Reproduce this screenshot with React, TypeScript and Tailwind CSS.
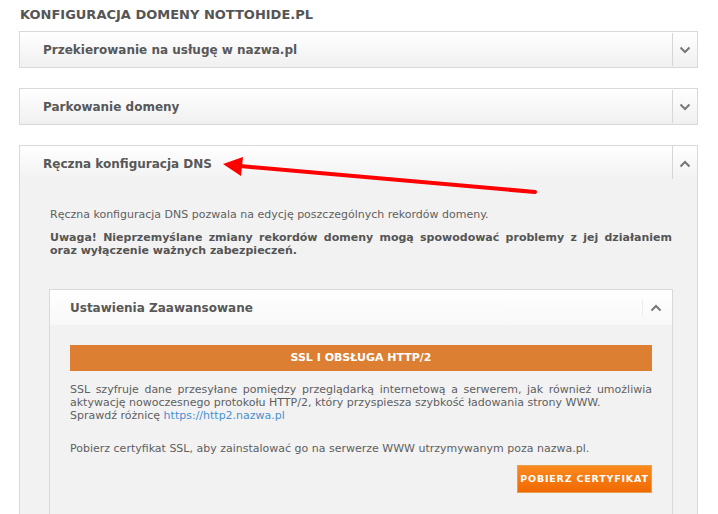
import React from "react";

const Chevron = ({ up }: { up?: boolean }) => (
  <svg width="12" height="8" viewBox="0 0 12 8" className="block">
    {up ? (
      <polyline points="1.5,6.5 6,2 10.5,6.5" fill="none" stroke="#777" strokeWidth="2" />
    ) : (
      <polyline points="1.5,1.5 6,6 10.5,1.5" fill="none" stroke="#777" strokeWidth="2" />
    )}
  </svg>
);

const CollapsedPanel = ({ title }: { title: string }) => (
  <div className="border border-[#d9d9d9] h-[37px] flex bg-gradient-to-b from-[#ffffff] to-[#f0f0f0]">
    <div className="flex-1 flex items-center pl-[23px] text-[12px] font-bold text-[#585858]">{title}</div>
    <div className="w-[25px] my-px border-l border-[#d6d6d6] flex items-center justify-center">
      <Chevron />
    </div>
  </div>
);

export default function App() {
  return (
    <div
      className="w-[718px] h-[514px] overflow-hidden bg-white relative text-[#5f5f5f]"
      style={{ fontFamily: '"DejaVu Sans", Verdana, sans-serif' }}
    >
      <div className="pl-[19px] pr-[20px] pt-[7px]">
        <div className="text-[13px] font-bold text-[#555] pl-px h-[24px] leading-[16px]">
          KONFIGURACJA DOMENY NOTTOHIDE.PL
        </div>
        <CollapsedPanel title="Przekierowanie na usługę w nazwa.pl" />
        <div className="h-[20px]" />
        <CollapsedPanel title="Parkowanie domeny" />
        <div className="h-[20px]" />
        <div className="border border-[#d9d9d9] bg-[#f2f2f2] h-[400px]">
          <div className="h-[33px] flex bg-gradient-to-b from-[#ffffff] to-[#f2f2f2]">
            <div className="flex-1 flex items-center pl-[23px] pt-[2px] text-[12px] font-bold text-[#585858]">
              Ręczna konfiguracja DNS
            </div>
            <div className="w-[25px] border-l border-[#d6d6d6] flex items-center justify-center pt-[2px]">
              <Chevron up />
            </div>
          </div>
          <div className="pl-[29px] pr-[24px] pt-[29px]">
            <p className="px-px text-[11px] leading-[13px]">
              Ręczna konfiguracja DNS pozwala na edycję poszczególnych rekordów domeny.
            </p>
            <p className="px-px mt-[10px] text-[11px] leading-[13px] font-bold text-justify text-[#555]">
              Uwaga! Nieprzemyślane zmiany rekordów domeny mogą spowodować problemy z jej działaniem oraz wyłączenie ważnych zabezpieczeń.
            </p>
            <div className="mt-[32px] border border-[#d9d9d9] bg-[#f2f2f2]">
              <div className="h-[35px] flex bg-gradient-to-b from-[#ffffff] to-[#f8f8f8]">
                <div className="flex-1 flex items-center pl-[20px] text-[12px] font-bold text-[#585858]">
                  Ustawienia Zaawansowane
                </div>
                <div className="w-[30px] flex items-center">
                  <div className="h-[17px] border-l border-[#ececec]" />
                  <div className="flex-1 flex justify-center pr-[4px]">
                    <Chevron up />
                  </div>
                </div>
              </div>
              <div className="px-[20px] pt-[20px] pb-[40px]">
                <div className="h-[26px] bg-[#dc7f33] flex items-center justify-center text-white font-bold text-[11px]">
                  SSL I OBSŁUGA HTTP/2
                </div>
                <p className="mt-[12px] text-[11px] leading-[13px] text-justify">
                  SSL szyfruje dane przesyłane pomiędzy przeglądarką internetową a serwerem, jak również umożliwia aktywację nowoczesnego protokołu HTTP/2, który przyspiesza szybkość ładowania strony WWW.
                  <br />
                  Sprawdź różnicę <span className="text-[#4a90d0]">https://http2.nazwa.pl</span>
                </p>
                <p className="mt-[20px] text-[11px] leading-[13px]">
                  Pobierz certyfikat SSL, aby zainstalować go na serwerze WWW utrzymywanym poza nazwa.pl.
                </p>
                <div className="mt-[10px] flex justify-end">
                  <div className="w-[135px] h-[28px] border border-[#e9a04e] bg-gradient-to-b from-[#fb8a1e] to-[#f06800] flex items-center justify-center text-white font-bold text-[9.5px] tracking-[0.8px]">
                    POBIERZ CERTYFIKAT
                  </div>
                </div>
              </div>
            </div>
          </div>
        </div>
      </div>
      <svg className="absolute left-0 top-0 pointer-events-none" width="718" height="514">
        <line x1="240" y1="166" x2="535" y2="192" stroke="#ff0000" strokeWidth="4" strokeLinecap="round" />
        <polygon points="223,164 243,157 241,176" fill="#ff0000" />
      </svg>
    </div>
  );
}
